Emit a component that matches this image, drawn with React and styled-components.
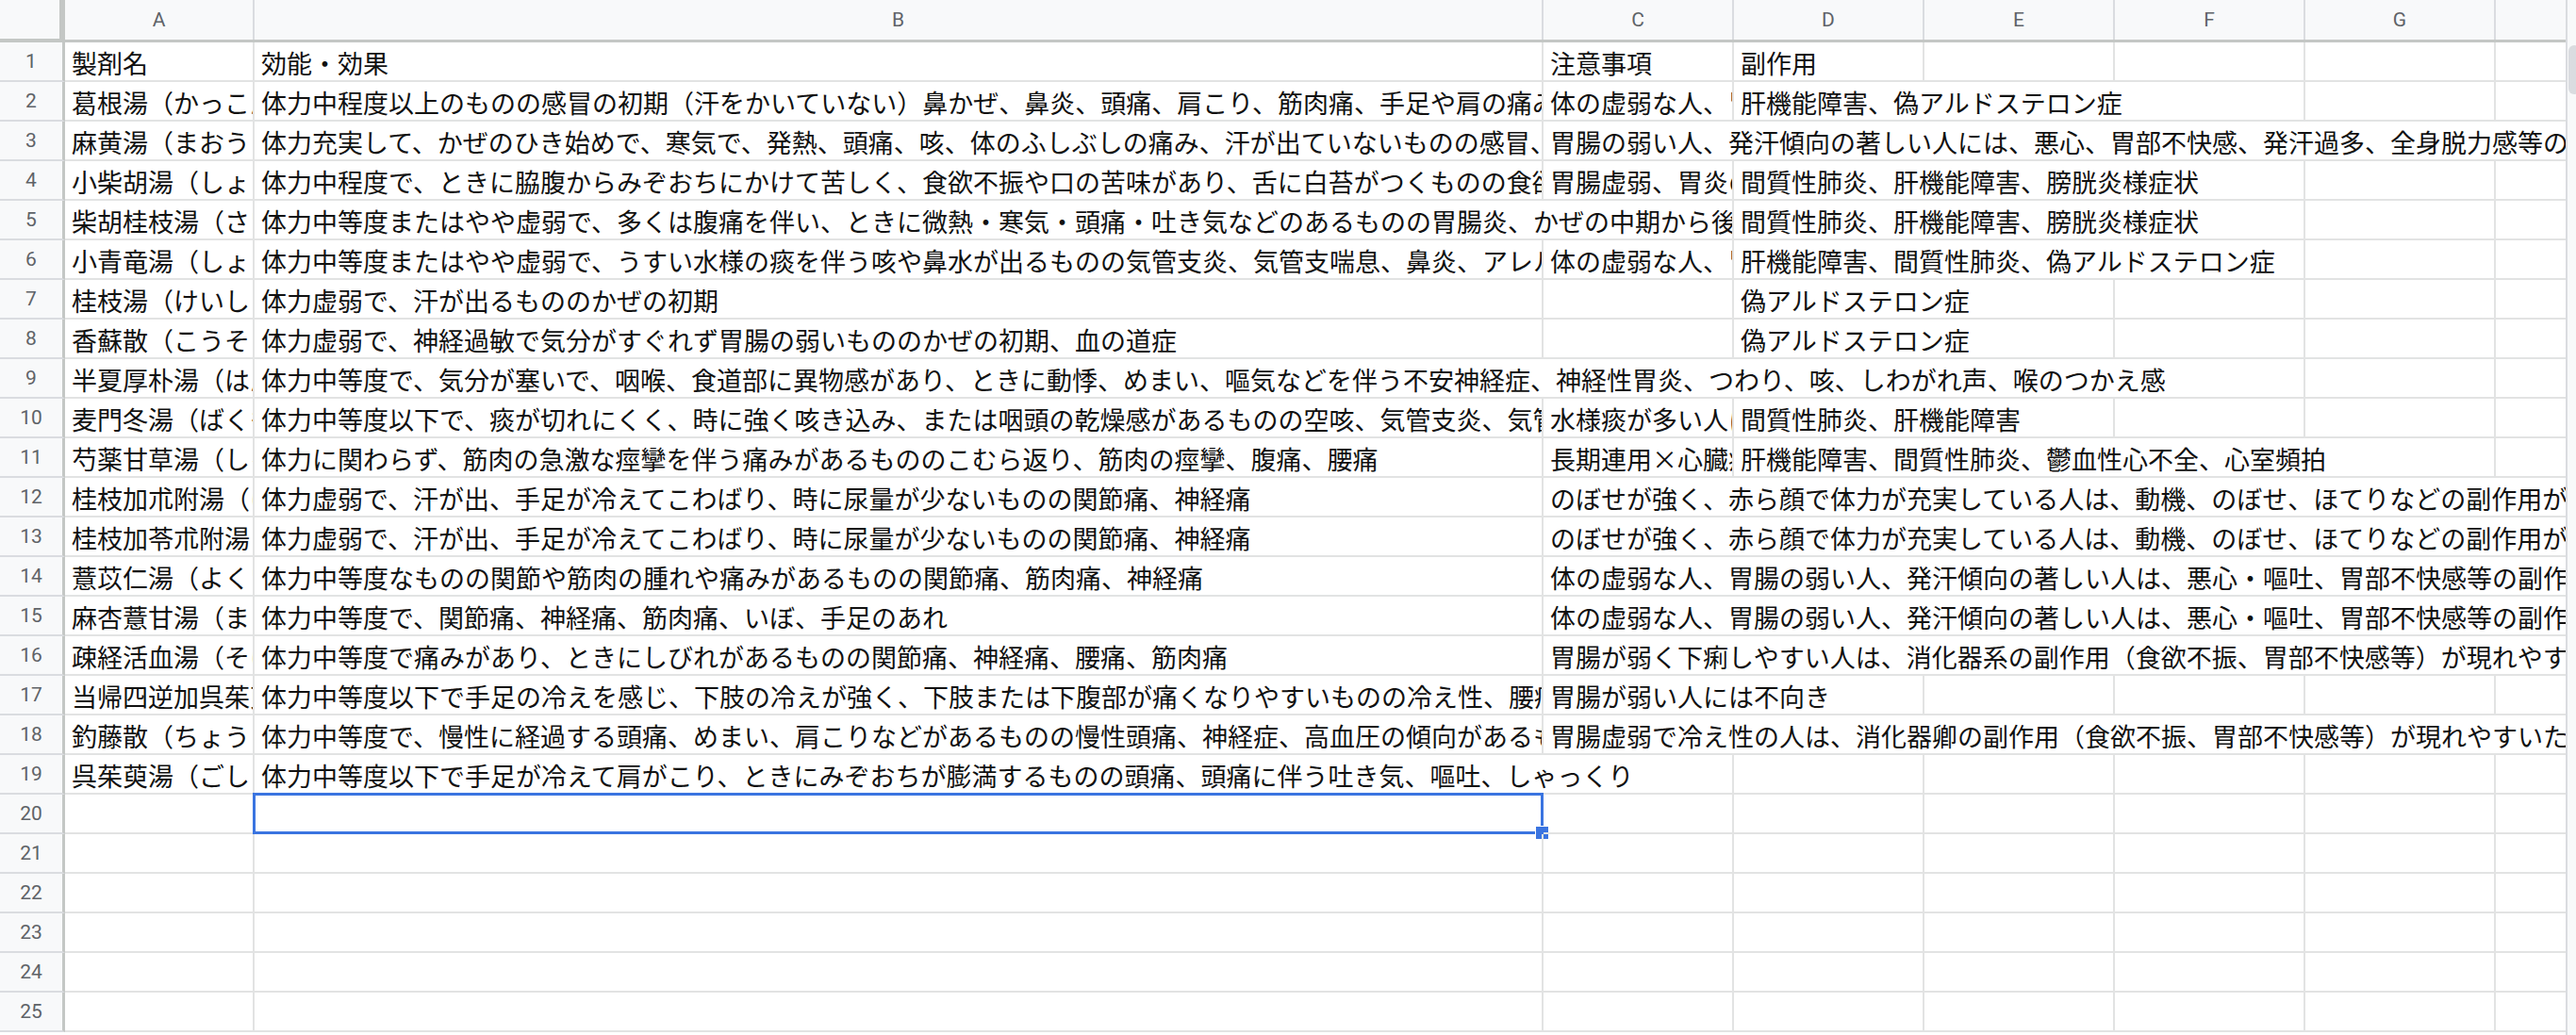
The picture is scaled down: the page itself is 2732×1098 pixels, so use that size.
import React from "react";
import styled, { createGlobalStyle } from "styled-components";

const Global = createGlobalStyle`
  html, body { margin: 0; padding: 0; background: #fff; }
  body { font-family: "Noto Sans CJK JP", "Noto Sans", sans-serif; }
`;

const COLS = [201, 1367, 202, 202, 202, 202, 202, 76];
const LETTERS = ["A", "B", "C", "D", "E", "F", "G", ""];
const ROW_H = 42;

const rows = [
  ["製剤名", "効能・効果", "注意事項", "副作用"],
  ["葛根湯（かっこんとう）", "体力中程度以上のものの感冒の初期（汗をかいていない）鼻かぜ、鼻炎、頭痛、肩こり、筋肉痛、手足や肩の痛み", "体の虚弱な人、胃腸の弱い人", "肝機能障害、偽アルドステロン症"],
  ["麻黄湯（まおうとう）", "体力充実して、かぜのひき始めで、寒気で、発熱、頭痛、咳、体のふしぶしの痛み、汗が出ていないものの感冒、鼻かぜ", "胃腸の弱い人、発汗傾向の著しい人には、悪心、胃部不快感、発汗過多、全身脱力感等の副作用が現れやすい", ""],
  ["小柴胡湯（しょうさいことう）", "体力中程度で、ときに脇腹からみぞおちにかけて苦しく、食欲不振や口の苦味があり、舌に白苔がつくものの食欲不振、吐き気", "胃腸虚弱、胃炎のような消化器症状", "間質性肺炎、肝機能障害、膀胱炎様症状"],
  ["柴胡桂枝湯（さいこけいしとう）", "体力中等度またはやや虚弱で、多くは腹痛を伴い、ときに微熱・寒気・頭痛・吐き気などのあるものの胃腸炎、かぜの中期から後期の症状", "", "間質性肺炎、肝機能障害、膀胱炎様症状"],
  ["小青竜湯（しょうせいりゅうとう）", "体力中等度またはやや虚弱で、うすい水様の痰を伴う咳や鼻水が出るものの気管支炎、気管支喘息、鼻炎、アレルギー性鼻炎", "体の虚弱な人、胃腸の弱い人", "肝機能障害、間質性肺炎、偽アルドステロン症"],
  ["桂枝湯（けいしとう）", "体力虚弱で、汗が出るもののかぜの初期", "", "偽アルドステロン症"],
  ["香蘇散（こうそさん）", "体力虚弱で、神経過敏で気分がすぐれず胃腸の弱いもののかぜの初期、血の道症", "", "偽アルドステロン症"],
  ["半夏厚朴湯（はんげこうぼくとう）", "体力中等度で、気分が塞いで、咽喉、食道部に異物感があり、ときに動悸、めまい、嘔気などを伴う不安神経症、神経性胃炎、つわり、咳、しわがれ声、喉のつかえ感", "", ""],
  ["麦門冬湯（ばくもんどうとう）", "体力中等度以下で、痰が切れにくく、時に強く咳き込み、または咽頭の乾燥感があるものの空咳、気管支炎、気管支喘息", "水様痰が多い人には不向き", "間質性肺炎、肝機能障害"],
  ["芍薬甘草湯（しゃくやくかんぞうとう）", "体力に関わらず、筋肉の急激な痙攣を伴う痛みがあるもののこむら返り、筋肉の痙攣、腹痛、腰痛", "長期連用×心臓病", "肝機能障害、間質性肺炎、鬱血性心不全、心室頻拍"],
  ["桂枝加朮附湯（けいしかじゅつぶとう）", "体力虚弱で、汗が出、手足が冷えてこわばり、時に尿量が少ないものの関節痛、神経痛", "のぼせが強く、赤ら顔で体力が充実している人は、動機、のぼせ、ほてりなどの副作用が出やすい", ""],
  ["桂枝加苓朮附湯（けいしかりょうじゅつぶとう）", "体力虚弱で、汗が出、手足が冷えてこわばり、時に尿量が少ないものの関節痛、神経痛", "のぼせが強く、赤ら顔で体力が充実している人は、動機、のぼせ、ほてりなどの副作用が出やすい", ""],
  ["薏苡仁湯（よくいにんとう）", "体力中等度なものの関節や筋肉の腫れや痛みがあるものの関節痛、筋肉痛、神経痛", "体の虚弱な人、胃腸の弱い人、発汗傾向の著しい人は、悪心・嘔吐、胃部不快感等の副作用が現れやすい", ""],
  ["麻杏薏甘湯（まきょうよくかんとう）", "体力中等度で、関節痛、神経痛、筋肉痛、いぼ、手足のあれ", "体の虚弱な人、胃腸の弱い人、発汗傾向の著しい人は、悪心・嘔吐、胃部不快感等の副作用が現れやすい", ""],
  ["疎経活血湯（そけいかっけつとう）", "体力中等度で痛みがあり、ときにしびれがあるものの関節痛、神経痛、腰痛、筋肉痛", "胃腸が弱く下痢しやすい人は、消化器系の副作用（食欲不振、胃部不快感等）が現れやすい", ""],
  ["当帰四逆加呉茱萸生姜湯（とうきしぎゃくかごしゅゆしょうきょうとう）", "体力中等度以下で手足の冷えを感じ、下肢の冷えが強く、下肢または下腹部が痛くなりやすいものの冷え性、腰痛", "胃腸が弱い人には不向き", ""],
  ["釣藤散（ちょうとうさん）", "体力中等度で、慢性に経過する頭痛、めまい、肩こりなどがあるものの慢性頭痛、神経症、高血圧の傾向があるもの", "胃腸虚弱で冷え性の人は、消化器卿の副作用（食欲不振、胃部不快感等）が現れやすいため注意", ""],
  ["呉茱萸湯（ごしゅゆとう）", "体力中等度以下で手足が冷えて肩がこり、ときにみぞおちが膨満するものの頭痛、頭痛に伴う吐き気、嘔吐、しゃっくり", "", ""],
];
while (rows.length < 25) rows.push([]);

const textWidth = (s) => {
  let w = 0;
  for (const ch of s) w += ch.charCodeAt(0) > 0x2000 ? 27.2 : 14;
  return w + 12;
};

function layoutRow(cells) {
  const out = [];
  let i = 0;
  while (i < COLS.length) {
    const text = cells[i] || "";
    let width = COLS[i];
    let j = i + 1;
    if (text) {
      const need = textWidth(text);
      while (j < COLS.length && !cells[j] && width < need) {
        width += COLS[j];
        j++;
      }
    }
    out.push({ text, width, start: i });
    i = j;
  }
  return out;
}

const Page = styled.div`
  width: 2732px;
  height: 1098px;
  display: flex;
  overflow: hidden;
  background: #fff;
`;

const Sheet = styled.div`
  width: 2723px;
  display: flex;
  flex-direction: column;
  overflow: hidden;
`;

const HeaderRow = styled.div`
  display: flex;
  height: 45px;
  flex: none;
  background: #f8f9fa;
  border-bottom: 3px solid #c4c7c5;
  box-sizing: border-box;
`;

const Corner = styled.div`
  width: 69px;
  flex: none;
  box-sizing: border-box;
  border-right: 6px solid #c4c7c5;
  border-bottom: 4px solid #c4c7c5;
  margin-bottom: -3px;
`;

const ColHead = styled.div`
  flex: none;
  box-sizing: border-box;
  border-right: 2px solid #dadce0;
  display: flex;
  align-items: center;
  justify-content: center;
  font-family: Roboto, "Liberation Sans", sans-serif;
  font-size: 21px;
  color: #5f6368;
`;

const Row = styled.div`
  display: flex;
  height: ${ROW_H}px;
  flex: none;
`;

const RowNum = styled.div`
  width: 69px;
  flex: none;
  box-sizing: border-box;
  background: #f8f9fa;
  border-right: 3px solid #c4c7c5;
  border-bottom: 2px solid #dadce0;
  display: flex;
  align-items: center;
  justify-content: center;
  font-family: Roboto, "Liberation Sans", sans-serif;
  font-size: 21px;
  color: #5f6368;
`;

const Cell = styled.div`
  flex: none;
  position: relative;
  box-sizing: border-box;
  border-right: 2px solid #e2e3e3;
  border-bottom: 2px solid #e2e3e3;
  padding: 2px 0 0 7px;
  display: flex;
  align-items: center;
  white-space: nowrap;
  overflow: ${(p) => (p.$selected ? "visible" : "hidden")};
  font-family: "Noto Sans CJK JP", "Noto Sans", sans-serif;
  font-size: 27px;
  color: #111;
`;

const Selection = styled.div`
  position: absolute;
  left: -2px;
  top: -2px;
  right: -2px;
  bottom: -2px;
  border: 3px solid #3a74e0;
  pointer-events: none;
  &::after {
    content: "";
    position: absolute;
    right: -9px;
    bottom: -9px;
    width: 13px;
    height: 13px;
    background: #3a74e0;
    border: 1px solid #fff;
  }
`;

const ScrollTrack = styled.div`
  width: 9px;
  flex: none;
  position: relative;
  border-left: 2px solid #dadce0;
  background: #f8f9fa;
`;

const Thumb = styled.div`
  position: absolute;
  top: 48px;
  left: 1px;
  width: 12px;
  height: 52px;
  border-radius: 6px;
  background: #dadce0;
`;

export default function App() {
  return (
    <Page>
      <Global />
      <Sheet>
        <HeaderRow>
          <Corner />
          {COLS.map((w, i) => (
            <ColHead key={i} style={{ width: w }}>
              {LETTERS[i]}
            </ColHead>
          ))}
        </HeaderRow>
        {rows.map((cells, r) => (
          <Row key={r}>
            <RowNum>{r + 1}</RowNum>
            {layoutRow(cells).map((c) => {
              const selected = r === 19 && c.start === 1;
              return (
                <Cell key={c.start} style={{ width: c.width }} $selected={selected}>
                  {c.text}
                  {selected && <Selection />}
                </Cell>
              );
            })}
          </Row>
        ))}
      </Sheet>
      <ScrollTrack>
        <Thumb />
      </ScrollTrack>
    </Page>
  );
}
